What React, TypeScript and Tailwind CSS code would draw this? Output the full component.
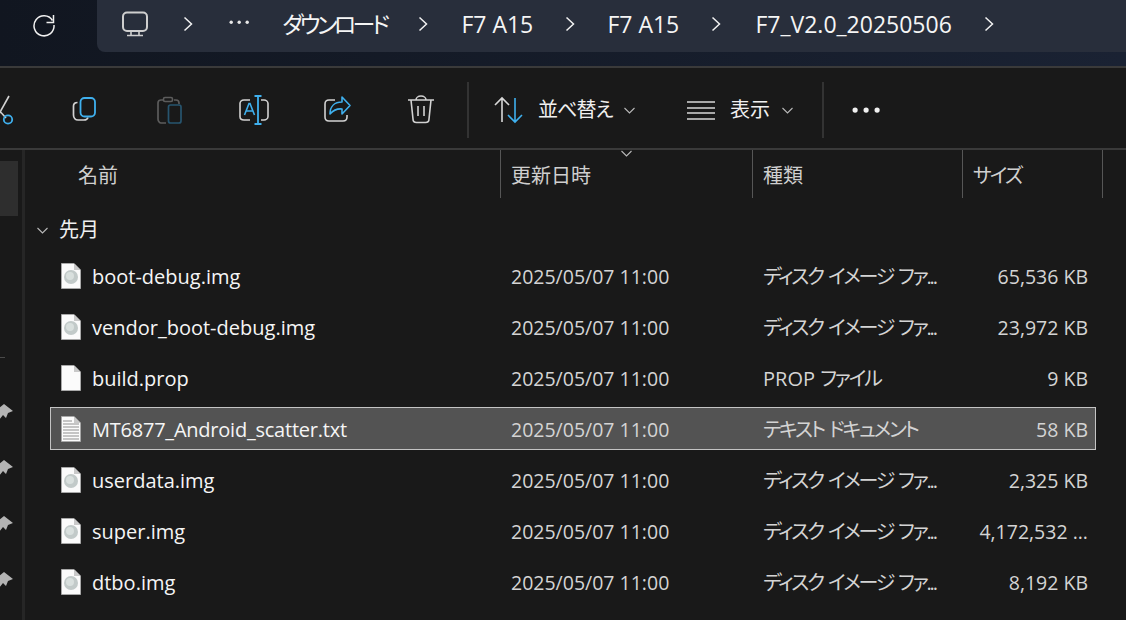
const font = "font-['Open_Sans','Noto_Sans_CJK_JP',sans-serif]";

const discType = "ディスク イメージ ファ...";

const files = [
  { name: "boot-debug.img", type: discType, size: "65,536 KB", icon: "disc" },
  { name: "vendor_boot-debug.img", type: discType, size: "23,972 KB", icon: "disc" },
  { name: "build.prop", prefix: "PROP ", type: "ファイル", size: "9 KB", icon: "blank" },
  { name: "MT6877_Android_scatter.txt", type: "テキスト ドキュメント", size: "58 KB", icon: "text", selected: true },
  { name: "userdata.img", type: discType, size: "2,325 KB", icon: "disc" },
  { name: "super.img", type: discType, size: "4,172,532 ...", icon: "disc" },
  { name: "dtbo.img", type: discType, size: "8,192 KB", icon: "disc" },
  { name: "", type: "", size: "", icon: "blank" },
];

function Chevron() {
  return (
    <svg width="10" height="16" viewBox="0 0 10 16" fill="none" stroke="#f2f2f2" strokeWidth="1.5" className="shrink-0">
      <path d="M1.5 1.5 8.5 8 1.5 14.5" />
    </svg>
  );
}

function SmallChevron() {
  return (
    <svg width="11" height="7" viewBox="0 0 11 7" fill="none" stroke="#b8b8b8" strokeWidth="1.1" className="shrink-0">
      <path d="M.5 1 5.5 6 10.5 1" />
    </svg>
  );
}

function Refresh() {
  return (
    <svg width="24" height="24" viewBox="0 0 24 24" fill="none" stroke="#f0f0f0" strokeWidth="1.5">
      <path d="M20.5 7.5A10 10 0 1 0 22 12" />
      <path d="M21.5 2v7.5H14.5" />
    </svg>
  );
}

function Monitor() {
  return (
    <svg width="28" height="26" viewBox="0 0 28 26" fill="none" stroke="#cfcfcf" strokeWidth="2">
      <rect x="2" y="1.5" width="24" height="18.5" rx="4" />
      <path d="M10 20v4.5M18 20v4.5M6 24.5h16" strokeWidth="1.6" />
    </svg>
  );
}

function Dots({ gap, r, color }: { gap: number; r: number; color: string }) {
  return (
    <svg width={gap * 2 + r * 2 + 1} height={r * 2 + 1} fill={color}>
      <circle cx={r + 0.5} cy={r + 0.5} r={r} />
      <circle cx={r + 0.5 + gap} cy={r + 0.5} r={r} />
      <circle cx={r + 0.5 + gap * 2} cy={r + 0.5} r={r} />
    </svg>
  );
}

function ToolIcon({ children }: { children: React.ReactNode }) {
  return (
    <div className="w-[84px] h-full flex items-center justify-center shrink-0">
      <svg width="32" height="32" viewBox="0 0 32 32" fill="none" strokeWidth="1.6">
        {children}
      </svg>
    </div>
  );
}

const blue = "#3fb0ee";
const gray = "#d2d2d2";

function FileIcon({ kind }: { kind: string }) {
  return (
    <svg width="20" height="26" viewBox="0 0 20 26" className="shrink-0">
      <path d="M.5.5H13L19.5 7V25.5H.5Z" fill="#fbfbfb" stroke="#a8a8a8" strokeWidth="1" />
      <path d="M13 .5V7H19.5Z" fill="#c9c9c9" />
      {kind === "disc" && (
        <>
          <circle cx="10" cy="14" r="7" fill="#c2cac9" />
          <circle cx="9" cy="13" r="4" fill="#d9e0de" />
        </>
      )}
      {kind === "text" && (
        <path d="M2 5h9M2 8h16M2 11h16M2 14h16M2 17h16M2 20h16M2 23h16" stroke="#8f8f8f" strokeWidth="1" />
      )}
    </svg>
  );
}

function Pin() {
  return (
    <svg width="13" height="16" viewBox="0 0 13 16" fill="#b4b4b4">
      <path d="M-2 5 4 0 13 7 8 9 6 14 3 11-1 16-3 14 0 9Z" />
    </svg>
  );
}

export default function App() {
  return (
    <div className={`w-[1126px] h-[620px] overflow-hidden flex flex-col bg-[#191919] text-[20px] [font-feature-settings:'palt'] ${font}`}>
      {/* address bar */}
      <div className="h-[66px] shrink-0 flex items-start bg-linear-to-r from-[#111620] to-[#1a2233]">
        <div className="w-[88px] h-[50px] flex items-center justify-center shrink-0">
          <Refresh />
        </div>
        <div className="ml-[9px] flex-1 h-[52px] rounded-bl-lg bg-[#282e3b] flex items-center text-[#f5f5f5] text-[23px] pl-[24px] pb-[4px]">
          <Monitor />
          <div className="ml-[34px]"><Chevron /></div>
          <div className="ml-[36px] mt-[-3px]"><Dots gap={8} r={1.7} color="#e8e8e8" /></div>
          <span className="ml-[33px] w-[106px] whitespace-nowrap tracking-[-3.6px]">ダウンロード</span>
          <div className="ml-[30px]"><Chevron /></div>
          <span className="ml-[33px] w-[73px] whitespace-nowrap">F7 A15</span>
          <div className="ml-[31px]"><Chevron /></div>
          <span className="ml-[32px] w-[74px] whitespace-nowrap">F7 A15</span>
          <div className="ml-[30px]"><Chevron /></div>
          <span className="ml-[34px] w-[197px] whitespace-nowrap">F7_V2.0_20250506</span>
          <div className="ml-[32px]"><Chevron /></div>
        </div>
      </div>

      {/* command bar */}
      <div className="h-[84px] shrink-0 flex items-center border-y-2 border-[#3a3a3a] text-[#f0f0f0] pt-[4px]">
        <div className="flex items-center h-full ml-[-41px] w-[508px] shrink-0">
          <ToolIcon>
            <path d="M24 2 14 20" stroke={gray} />
            <path d="M12 14 21 24" stroke={gray} />
            <circle cx="23" cy="25.5" r="4.2" stroke={blue} strokeWidth="1.8" />
          </ToolIcon>
          <ToolIcon>
            <path d="M8.5 8.5C5.5 8.5 4.5 10.5 4.5 12V21C4.5 24 6.5 26 9 26H15C17 26 18.5 25 19 23.5" stroke={gray} strokeWidth="1.7" />
            <rect x="11.5" y="4" width="14.5" height="18.5" rx="4" stroke={blue} strokeWidth="1.8" />
          </ToolIcon>
          <ToolIcon>
            <path d="M11 6H8C6.5 6 5 7 5 9V25C5 27 6.5 29 8 29H13M21 6H23C25 6 26 7 26 9V10" stroke="#5c5c5c" strokeWidth="1.7" />
            <rect x="10.5" y="3.5" width="9" height="4" rx="1.5" stroke="#5c5c5c" />
            <rect x="15.5" y="11" width="12.5" height="18" rx="2" stroke="#27556f" strokeWidth="1.7" />
          </ToolIcon>
          <ToolIcon>
            <path d="M13 6H7C4.5 6 3 7.5 3 9.5V22.5C3 24.5 4.5 26 7 26H13M24 6H27C29 6 31 7.5 31 9.5V22.5C31 24.5 29 26 27 26H24" stroke={gray} />
            <path d="M7.5 21 12 9.5H13L17.5 21M9 17H16" stroke={blue} />
            <path d="M21 2V30M17.5 2H24.5M17.5 30H24.5" stroke={blue} strokeWidth="1.8" />
          </ToolIcon>
          <ToolIcon>
            <path d="M14 6H8C5.5 6 4 7.5 4 10V23C4 25.5 5.5 27 8 27H22C25 27 26 25.5 26 23V21" stroke={gray} />
            <path d="M21 3V8C14 8 9 12 9 20C13 15.5 16 14.5 21 15V20L29 11.5Z" stroke={blue} strokeLinejoin="round" />
          </ToolIcon>
          <ToolIcon>
            <path d="M3 6H29M11 6C11 4 13 2 16 2S21 4 21 6M6 6 8 25C8 27 9.5 28.5 11.5 28.5H20.5C22.5 28.5 24 27 24 25L26 6" stroke={gray} />
            <path d="M13 12V22M19 12V22" stroke={gray} />
          </ToolIcon>
        </div>
        <div className="w-[2px] h-[56px] bg-[#333333] shrink-0" />
        <svg width="30" height="28" viewBox="0 0 30 28" fill="none" strokeWidth="1.6" className="ml-[25px] shrink-0">
          <path d="M8 26V2M1 9 8 2 15 9" stroke="#d8d8d8" />
          <path d="M21 2V26M14 19 21 26 28 19" stroke={blue} />
        </svg>
        <span className="ml-[14px] w-[76px] whitespace-nowrap tracking-[-1px]">並べ替え</span>
        <div className="ml-[10px]"><SmallChevron /></div>
        <svg width="28" height="20" viewBox="0 0 28 20" stroke="#d8d8d8" strokeWidth="1.5" className="ml-[52px] shrink-0">
          <path d="M0 2H28M0 8H28M0 13H28M0 19H28" />
        </svg>
        <span className="ml-[15px] w-[41px] whitespace-nowrap">表示</span>
        <div className="ml-[11px]"><SmallChevron /></div>
        <div className="w-[2px] h-[56px] bg-[#333333] shrink-0 ml-[29px]" />
        <div className="ml-[28px]"><Dots gap={11} r={2.6} color="#f0f0f0" /></div>
      </div>

      <div className="flex-1 flex min-h-0">
        {/* nav pane edge */}
        <div className="w-[25px] shrink-0 border-r-[3px] border-[#262626] flex flex-col">
          <div className="w-[18px] h-[55px] mt-[11px] bg-[#2e2e2e] shrink-0" />
          <div className="w-[5px] h-px mt-[141px] bg-[#4a4a4a] shrink-0" />
          <div className="mt-[46px] flex flex-col gap-[40px]">
            <Pin />
            <Pin />
            <Pin />
            <Pin />
          </div>
        </div>

        <div className="flex-1 flex flex-col min-w-0">
          {/* column headers */}
          <div className="h-[48px] shrink-0 flex text-[#cfcfcf]">
            <div className="w-[475px] pl-[53px] pt-[3px] flex items-center">名前</div>
            <div className="relative w-[252px] pl-[10px] pt-[3px] flex items-center border-l-[1.5px] border-[#565656]">
              <span>更新日時</span>
              <div className="absolute left-[120px] top-[0px]"><SmallChevron /></div>
            </div>
            <div className="w-[210px] pl-[10px] pt-[3px] flex items-center border-l-[1.5px] border-[#565656]">種類</div>
            <div className="w-[141px] pl-[10px] pt-[3px] flex items-center border-l-[1.5px] border-r-[1.5px] border-[#565656] tracking-[-2px]">サイズ</div>
          </div>

          {/* group header */}
          <div className="h-[56px] shrink-0 flex items-start pt-[19px] text-[#f0f0f0]">
            <div className="ml-[12px] mt-[10px]"><SmallChevron /></div>
            <span className="ml-[11px] leading-[26px]">先月</span>
          </div>

          {/* rows */}
          <div className="flex flex-col gap-[8px] w-[1046px] ml-[25px]">
            {files.map((f, i) => (
              <div
                key={i}
                className={`h-[43px] shrink-0 grid grid-cols-[460px_252px_1fr_auto] items-center border-[1.5px] ${
                  f.selected ? "bg-[#535353] border-[#c4c4c4]" : "border-transparent"
                }`}
              >
                <div className="flex items-center pl-[10px] gap-[11px] text-[#f5f5f5]">
                  <FileIcon kind={f.icon} />
                  <span className={`whitespace-nowrap pt-[2px] ${f.selected ? "tracking-[-0.23px]" : ""}`}>{f.name}</span>
                </div>
                <span className="text-[#d4d4d4] text-[19.5px] whitespace-nowrap pt-[2px]">{f.name && "2025/05/07 11:00"}</span>
                <span className="text-[#d4d4d4] whitespace-nowrap pt-[2px]">
                  {f.prefix}
                  <span className="tracking-[-2.2px] [word-spacing:2px]">{f.type}</span>
                </span>
                <span className="text-[#d4d4d4] text-[19.5px] whitespace-nowrap pr-[7px] pt-[2px] text-right">{f.size}</span>
              </div>
            ))}
          </div>
        </div>
      </div>
    </div>
  );
}
